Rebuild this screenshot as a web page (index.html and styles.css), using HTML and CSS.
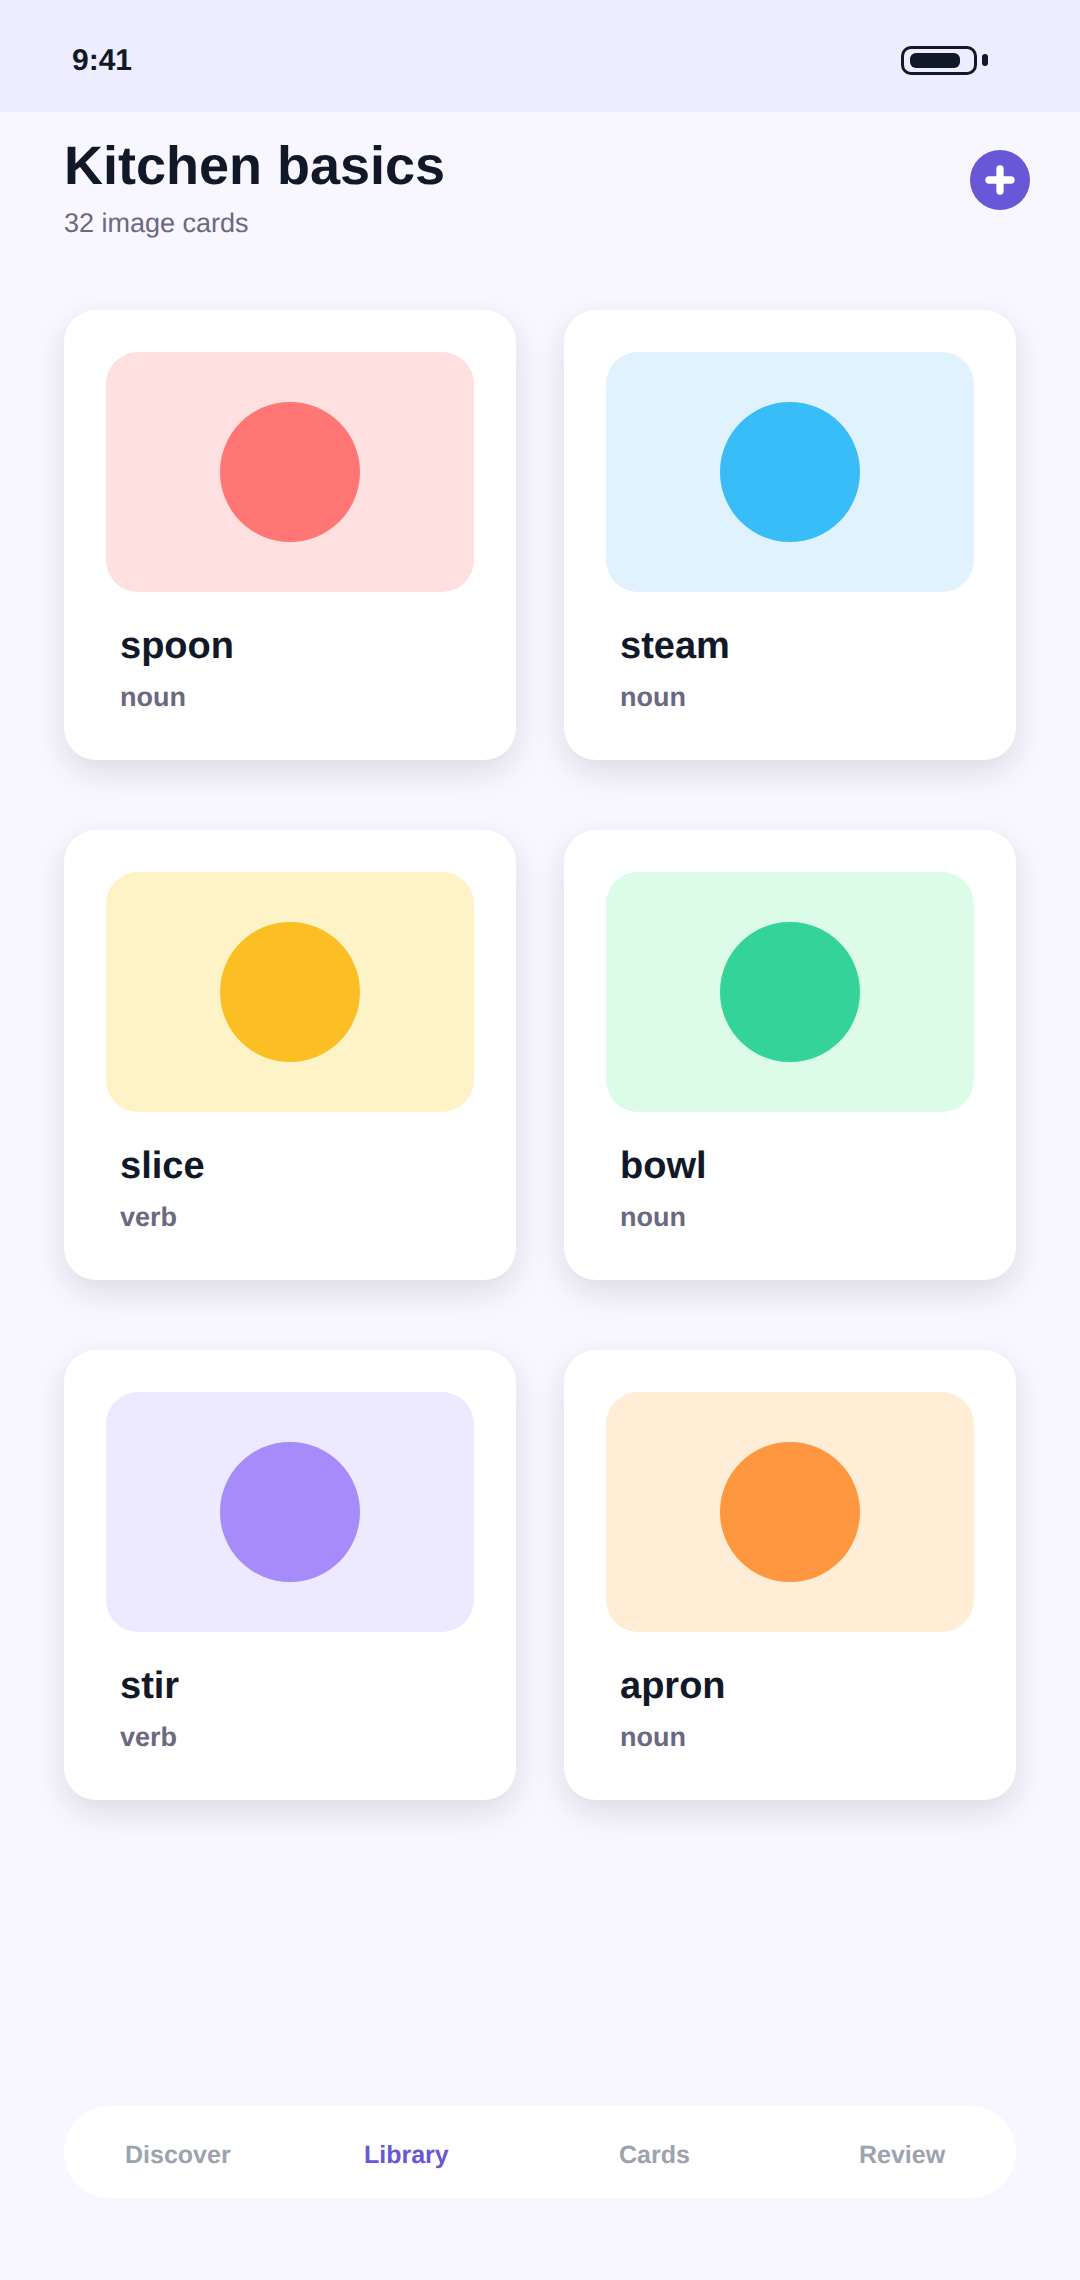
FILE: index.html
```html
<!DOCTYPE html>
<html lang="en">
<head>
    <meta charset="UTF-8">
    <meta name="viewport" content="width=device-width, initial-scale=1.0">
    <title>Kitchen basics</title>
    <link rel="stylesheet" href="styles.css">
</head>
<body>

    <div class="status-bar">
        <span class="time">9:41</span>
        <div class="battery">
            <div class="battery-body"><div class="battery-level"></div></div>
            <div class="battery-nub"></div>
        </div>
    </div>

    <div class="header">
        <div>
            <h1>Kitchen basics</h1>
            <p class="count">32 image cards</p>
        </div>
        <button class="add-btn" aria-label="Add card">
            <svg width="30" height="30" viewBox="0 0 30 30">
                <path d="M15 4V26M4 15H26" stroke="#fff" stroke-width="7.300" stroke-linecap="round" fill="none"/>
            </svg>
        </button>
    </div>

    <div class="card-grid">
        <div class="card">
            <div class="thumb thumb-red"><div class="dot"></div></div>
            <h2>spoon</h2>
            <p class="kind">noun</p>
        </div>
        <div class="card">
            <div class="thumb thumb-blue"><div class="dot"></div></div>
            <h2>steam</h2>
            <p class="kind">noun</p>
        </div>
        <div class="card">
            <div class="thumb thumb-yellow"><div class="dot"></div></div>
            <h2>slice</h2>
            <p class="kind">verb</p>
        </div>
        <div class="card">
            <div class="thumb thumb-green"><div class="dot"></div></div>
            <h2>bowl</h2>
            <p class="kind">noun</p>
        </div>
        <div class="card">
            <div class="thumb thumb-purple"><div class="dot"></div></div>
            <h2>stir</h2>
            <p class="kind">verb</p>
        </div>
        <div class="card">
            <div class="thumb thumb-orange"><div class="dot"></div></div>
            <h2>apron</h2>
            <p class="kind">noun</p>
        </div>
    </div>

    <nav class="tab-bar">
        <a>Discover</a>
        <a class="active">Library</a>
        <a>Cards</a>
        <a>Review</a>
    </nav>

</body>
</html>
```

FILE: styles.css
```css
* {
    box-sizing: border-box;
}
body {
    margin: 0;
    height: 2280px;
    display: flex;
    flex-direction: column;
    font-family: "Liberation Sans", Arial, sans-serif;
    text-rendering: geometricPrecision;
    background-color: #f8f7ff;
    color: #111827;
    overflow: hidden;
}
h1, h2, p {
    margin: 0;
}

.status-bar {
    height: 112px;
    padding: 8px 92px 0 72px;
    display: flex;
    align-items: center;
    justify-content: space-between;
    background: #eeedff;
}
.time {
    margin-top: 2px;
    font-size: 30px;
    font-weight: 700;
}
.battery {
    display: flex;
    align-items: center;
    gap: 5px;
}
.battery-body {
    width: 76px;
    height: 29px;
    padding: 4px 6px;
    border: 3px solid #111827;
    border-radius: 10px;
}
.battery-level {
    width: 50px;
    height: 15px;
    border-radius: 6px;
    background: #111827;
}
.battery-nub {
    width: 6px;
    height: 12px;
    border-radius: 3px;
    background: #111827;
}

.header {
    height: 198px;
    padding: 24px 50px 0 64px;
    display: flex;
    justify-content: space-between;
    align-items: flex-start;
}
h1 {
    font-size: 54px;
    line-height: 60px;
}
.count {
    margin-top: 11px;
    font-size: 27px;
    line-height: 32px;
    color: #6b6880;
}
.add-btn {
    width: 60px;
    height: 60px;
    margin-top: 14px;
    padding: 0;
    display: flex;
    align-items: center;
    justify-content: center;
    border: none;
    border-radius: 50%;
    background: #6857d6;
}

.card-grid {
    padding: 0 64px;
    display: grid;
    grid-template-columns: 452px 452px;
    grid-auto-rows: 450px;
    column-gap: 48px;
    row-gap: 70px;
}
.card {
    padding: 42px;
    border-radius: 32px;
    background: white;
    box-shadow: 0 12px 32px rgba(17, 24, 39, 0.12);
}
.thumb {
    height: 240px;
    display: flex;
    align-items: center;
    justify-content: center;
    border-radius: 32px;
}
.dot {
    width: 140px;
    height: 140px;
    border-radius: 50%;
}
.thumb-red { background: #ffe0e0; }
.thumb-red .dot { background: #ff7675; }
.thumb-blue { background: #e0f2fe; }
.thumb-blue .dot { background: #38bdf8; }
.thumb-yellow { background: #fef3c7; }
.thumb-yellow .dot { background: #fbbf24; }
.thumb-green { background: #dcfce7; }
.thumb-green .dot { background: #34d399; }
.thumb-purple { background: #ede9fe; }
.thumb-purple .dot { background: #a78bfa; }
.thumb-orange { background: #ffedd5; }
.thumb-orange .dot { background: #ff9640; }

h2 {
    margin: 31px 0 0 14px;
    font-size: 38px;
    line-height: 46px;
}
.kind {
    margin: 12px 0 0 14px;
    font-size: 27px;
    line-height: 32px;
    font-weight: 700;
    color: #6b6880;
}

.tab-bar {
    height: 92px;
    margin: auto 64px 82px;
    padding: 7px 0 0 61px;
    display: grid;
    grid-template-columns: 239px 255px 240px auto;
    align-items: center;
    border-radius: 46px;
    background: white;
}
.tab-bar a {
    font-size: 25px;
    font-weight: 700;
    color: #9ca3af;
}
.tab-bar a.active {
    color: #6857d6;
}
```
